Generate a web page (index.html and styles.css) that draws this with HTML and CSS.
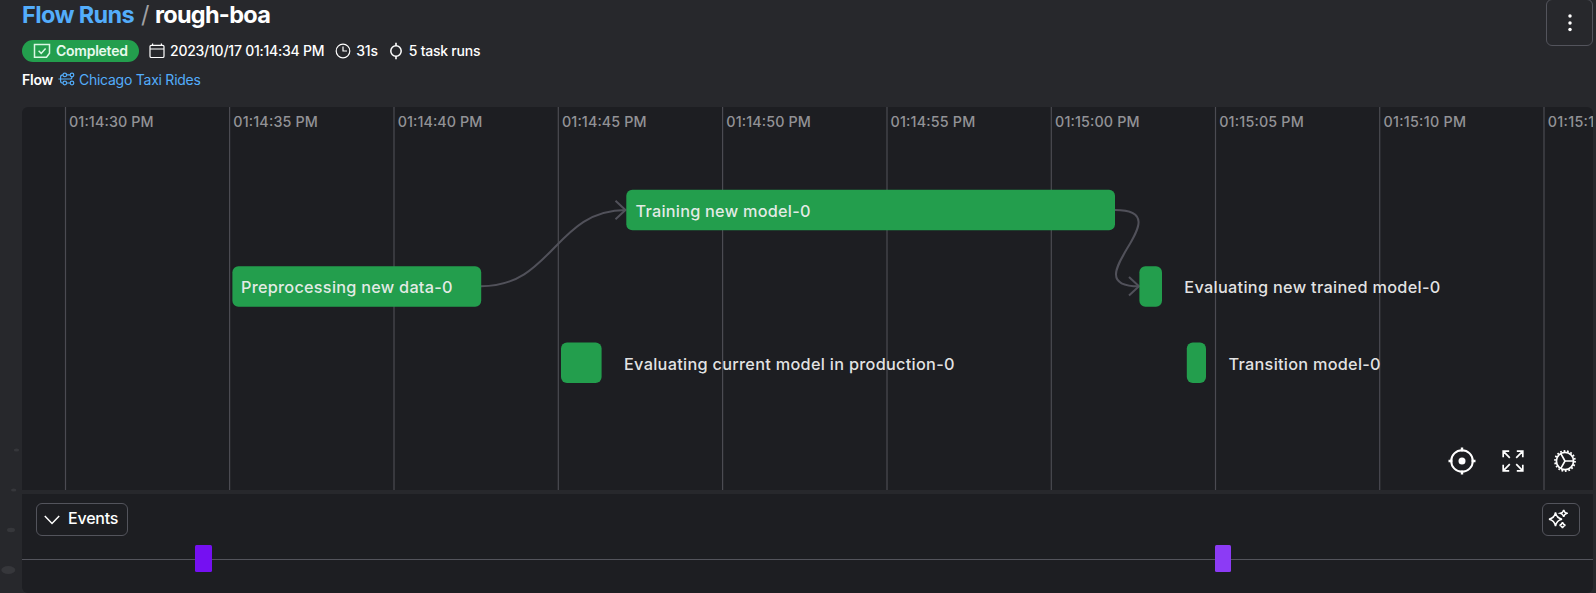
FILE: index.html
```html
<!DOCTYPE html>
<html lang="en">
<head>
<meta charset="utf-8">
<title>rough-boa</title>
<link rel="stylesheet" href="styles.css">
</head>
<body>
<div class="page">
  <svg class="backdrop" width="22" height="160" viewBox="0 0 22 160" aria-hidden="true">
    <ellipse cx="16.5" cy="17" rx="2.7" ry="1.6"/><ellipse cx="13.7" cy="57" rx="2.7" ry="1.6"/>
    <ellipse cx="11" cy="97" rx="4" ry="2.2"/><ellipse cx="8.3" cy="137" rx="7" ry="4"/>
  </svg>
  <header class="header">
    <div class="info">
      <h1 class="crumbs"><a class="crumb-link">Flow Runs</a><span class="slash">/</span><span class="run-name">rough-boa</span></h1>
      <div class="meta">
        <span class="badge">
          <svg class="badge-icon" width="18" height="16" viewBox="0 0 18 16"><path d="M1.5 1.6h15v8.6l-3 4h-12z"/><path d="m5.6 7.8 2.6 2.6 4.4-5"/></svg>
          <span class="badge-text">Completed</span>
        </span>
        <span class="item item-date"><svg width="16" height="16" viewBox="0 0 16 16"><path d="M2.2 2.4h11.6q1.2 0 1.2 1.2v9.6q0 1.3-1.3 1.3H2.3Q1 14.5 1 13.2V3.6q0-1.2 1.2-1.2zM1 6h14M3.6 .5v1.9M12.4.5v1.9"/></svg><span class="t-date">2023/10/17 01:14:34 PM</span></span>
        <span class="item item-dur"><svg width="16" height="16" viewBox="0 0 16 16"><circle cx="8" cy="8" r="6.8"/><path d="M8 3.6V8h4"/></svg><span class="t-dur">31s</span></span>
        <span class="item item-tasks"><svg width="14" height="18" viewBox="0 0 14 18"><circle cx="7" cy="9" r="5.2" stroke-width="1.5"/><path d="M7 .8v3M7 14.2v3" stroke-width="1.6"/></svg><span class="t-tasks">5 task runs</span></span>
      </div>
      <div class="flow">
        <span class="flow-label">Flow</span>
        <svg class="flow-icon" width="17" height="14" viewBox="0 0 17 14"><circle cx="6.8" cy="2.9" r="1.8"/><circle cx="14" cy="2.9" r="1.8"/><circle cx="6.8" cy="11" r="1.8"/><circle cx="14" cy="11" r="1.8"/><path d="M8.6 2.9h3.6M8.6 11h3.6M5 2.9Q2.6 2.9 2.6 5v1.9M.4 7h11.8q1.8 0 1.8-2.3M5 11Q2.6 11 2.6 8.9V7"/></svg>
        <a class="flow-link">Chicago Taxi Rides</a>
      </div>
    </div>
    <button class="menu" aria-label="Menu"><svg width="4" height="20" viewBox="0 0 4 20"><circle cx="2" cy="3" r="1.75"/><circle cx="2" cy="10" r="1.75"/><circle cx="2" cy="16.6" r="1.75"/></svg></button>
  </header>

  <section class="timeline">
    <svg class="graph" width="1571" height="383" viewBox="22 107 1571 383">
      <g class="grid">
        <path d="M65.5 107v383M229.6 107v383M394 107v383M558.3 107v383M722.6 107v383M887 107v383M1051.3 107v383M1215.5 107v383M1379.7 107v383M1544 107v383"/>
      </g>
      <g class="times">
        <text x="69" y="126.7" textLength="84.6">01:14:30 PM</text>
        <text x="233.3" y="126.7" textLength="84.6">01:14:35 PM</text>
        <text x="397.7" y="126.7" textLength="84.6">01:14:40 PM</text>
        <text x="562" y="126.7" textLength="84.6">01:14:45 PM</text>
        <text x="726.3" y="126.7" textLength="84.6">01:14:50 PM</text>
        <text x="890.6" y="126.7" textLength="84.6">01:14:55 PM</text>
        <text x="1055" y="126.7" textLength="84.6">01:15:00 PM</text>
        <text x="1219.2" y="126.7" textLength="84.6">01:15:05 PM</text>
        <text x="1383.5" y="126.7" textLength="82.5">01:15:10 PM</text>
        <text x="1547.8" y="126.7" textLength="82.5">01:15:15 PM</text>
      </g>
      <g class="edges">
        <path d="M481 286.3C553 286.3 555 210 626 210"/><path d="m615.5 200.7 10 9.3-10 9.3"/>
        <path d="M1115 210C1185 210 1070 286.3 1139 286.3"/><path d="m1129 277 10 9.3-10 9.3"/>
      </g>
      <g class="nodes">
        <rect x="626.3" y="189.8" width="488.7" height="40.5" rx="6"/>
        <rect x="232.4" y="266.3" width="248.8" height="40.5" rx="6"/>
        <rect x="561" y="342.6" width="40.6" height="40.5" rx="6"/>
        <rect x="1139.4" y="266.3" width="22.6" height="40.5" rx="6"/>
        <rect x="1186.8" y="342.6" width="19.2" height="40.5" rx="6"/>
      </g>
      <g class="labels">
        <text x="635.5" y="217" textLength="175">Training new model-0</text>
        <text x="241" y="293.4" textLength="211.5">Preprocessing new data-0</text>
        <text x="624" y="370" textLength="330.5">Evaluating current model in production-0</text>
        <text x="1184.3" y="293.4" textLength="256">Evaluating new trained model-0</text>
        <text x="1228.6" y="370" textLength="152">Transition model-0</text>
      </g>
    </svg>
    <div class="tools">
      <svg width="28" height="28" viewBox="0 0 28 28"><circle cx="14" cy="14" r="10.8" stroke-width="2"/><path d="M14 .5v4M14 23.5v4M.5 14h4M23.5 14h4" stroke-width="2.4"/><circle class="fill" cx="14" cy="14" r="3.5"/></svg>
      <svg class="expand" width="22" height="22" viewBox="0 0 22 22"><path d="M1.2 7.2v-6h6M1.2 1.2l6.6 6.6M14.8 1.2h6v6M20.8 1.2l-6.6 6.6M1.2 14.8v6h6M1.2 20.8l6.6-6.6M20.8 14.8v6h-6M20.8 20.8l-6.6-6.6" stroke-width="1.7"/></svg>
      <svg width="22" height="22" viewBox="0 0 22 22"><circle cx="11" cy="11" r="8.6" stroke-width="1.7"/><circle cx="11" cy="11" r="10" stroke-width="1.8" stroke-dasharray="1.75 1.74"/><path d="M11 11h8.5M11 11 6.8 3.6M11 11 6.8 18.4" stroke-width="1.6"/></svg>
    </div>
  </section>

  <section class="events">
    <div class="events-bar">
      <button class="events-toggle"><svg width="16" height="10" viewBox="0 0 16 10"><path d="m.8 1 7.2 7.4L15.2 1"/></svg><span>Events</span></button>
      <button class="spark" aria-label="Highlights"><svg width="20" height="20" viewBox="0 0 20 20"><path d="M7.5 3.5Q8.5 9 14 10.2Q8.5 11.4 7.5 17Q6.5 11.4 1 10.2Q6.5 9 7.5 3.5zM15.7.8q.6 2.8 3.3 3.5-2.7.7-3.3 3.5-.6-2.8-3.3-3.5 2.7-.7 3.3-3.5zM14.5 13.2q.5 2.4 2.9 3-2.4.6-2.9 3-.5-2.4-2.9-3 2.4-.6 2.9-3z"/></svg></button>
    </div>
    <svg class="events-track" width="1571" height="28" viewBox="22 545 1571 28">
      <path d="M22 559.5h1571"/>
      <rect x="195" y="545" width="17" height="27" rx="1.5" fill="#7510f2"/>
      <rect x="1215" y="545" width="16" height="27" rx="1.5" fill="#8c3bf5"/>
    </svg>
  </section>
</div>
</body>
</html>
```
FILE: styles.css
```css
* { box-sizing: border-box; }
body { margin: 0; background: #27282c; color: #fff; font-family: Inter, "Liberation Sans", sans-serif; }
svg { display: block; flex: none; fill: none; }
button { background: none; color: inherit; font: inherit; padding: 0; }
.page { position: relative; width: 1596px; height: 593px; overflow: hidden; padding: 0 3px 0 22px; display: flex; flex-direction: column; }
.backdrop { position: absolute; left: 0; top: 433px; fill: #36373b; }
.header { display: flex; justify-content: space-between; height: 107px; flex: none; }
.crumbs { margin: 0; display: flex; font-size: 23.5px; line-height: 30px; font-weight: 700; letter-spacing: -0.62px; }
.crumb-link, .flow-link { color: #53adfb; }
.run-name { letter-spacing: -0.72px; }
.slash { color: #a0a0a4; font-weight: 400; margin: 0 6px 0 7px; }
.meta { display: flex; align-items: center; height: 22px; margin-top: 10px; font-size: 14px; font-weight: 500; white-space: nowrap; }
.meta svg { stroke: #fff; stroke-width: 1.2; }
.badge { display: flex; align-items: center; width: 117px; height: 22px; border-radius: 11px; background: #239e4d; padding-left: 11px; gap: 5px; color: #e8faee; font-weight: 600; }
.meta .badge-icon { stroke: #d9f7e3; stroke-width: 1.5; }
.item { display: flex; align-items: center; gap: 5px; }
.item-date { margin-left: 10px; }
.item-dur { margin-left: 11px; }
.item-tasks { margin-left: 11px; gap: 6px; }
.t-date, .t-dur { letter-spacing: -0.24px; }
.t-tasks { letter-spacing: -0.24px; }
.badge-text { letter-spacing: -0.25px; }
.badge-text, .t-date, .t-dur, .t-tasks { line-height: 18px; padding-bottom: 1px; }
.flow { display: flex; align-items: center; height: 22px; margin-top: 6px; font-size: 14px; letter-spacing: -0.25px; }
.flow-label { font-weight: 600; margin-right: 5px; }
.flow-icon { stroke: #53adfb; stroke-width: 1.2; margin-right: 4px; }
.menu { width: 47px; height: 47px; margin-top: -1px; border: 1px solid #53545c; border-radius: 6px; display: grid; place-items: center; }
.menu svg { fill: #fff; }
.timeline { position: relative; height: 383px; flex: none; background: #1d1e22; border-radius: 6px 6px 0 0; overflow: hidden; }
.grid path { stroke: #4b4b52; stroke-width: 1.2; }
.times text { fill: #929296; font-size: 14.3px; font-weight: 500; }
.edges path { stroke: #51515a; stroke-width: 2; }
.nodes { fill: #239e4d; }
.labels text { fill: #f0f0f0; fill-opacity: .94; font-size: 16.3px; font-weight: 500; }
.tools { position: absolute; right: 17px; bottom: 15px; display: flex; align-items: center; gap: 28px; }
.tools svg { stroke: #fff; }
.tools .expand { margin: 0 2px 0 -2px; }
.tools .fill { fill: #fff; stroke: none; }
.events { height: 99px; margin-top: 4px; flex: none; background: #1d1e22; border-radius: 0 0 6px 6px; }
.events-bar { display: flex; justify-content: space-between; padding: 9px 13px 0 14px; height: 51px; }
.events-toggle { width: 92px; height: 33px; border: 1px solid #53545c; border-radius: 6px; display: flex; align-items: center; gap: 8px; padding-left: 7px; font-size: 16px; letter-spacing: -0.2px; font-weight: 500; }
.events-toggle span { padding-bottom: 3px; }
.events-toggle svg, .spark svg { stroke: #fff; stroke-width: 1.5; }
.spark { width: 38px; height: 33px; border: 1px solid #53545c; border-radius: 6px; padding: 0 0 1px 5px; display: flex; align-items: center; }
.events-track path { stroke: #53545c; }
```
